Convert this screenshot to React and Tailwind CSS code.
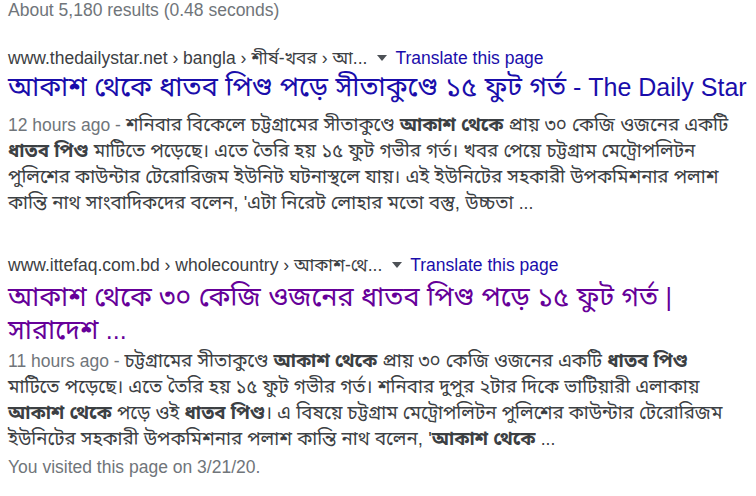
const F = { fontFamily: '"Liberation Sans", Arial, "Noto Sans Bengali", sans-serif' };

function Url({ domain, crumbs }) {
  return (
    <div className="flex items-center h-5 text-[17.5px] leading-5 whitespace-nowrap">
      <span className="text-[#3c4043]">{domain}{crumbs}</span>
      <span className="ml-[10px] mr-[8px] inline-block w-0 h-0 border-l-[5px] border-r-[5px] border-t-[6px] border-l-transparent border-r-transparent border-t-[#4d5156]" />
      <span className="text-[#1a0dab]">Translate this page</span>
    </div>
  );
}

function Date({ children }) {
  return <span className="text-[17.5px] text-[#70757a]">{children}</span>;
}

export default function App() {
  return (
    <div className="w-[756px] h-[496px] bg-white overflow-hidden pl-[8px]" style={F}>
      <div className="h-5 leading-5 text-[17.5px] text-[#70757a]">About 5,180 results (0.48 seconds)</div>

      <div className="mt-[28px]">
        <Url domain="www.thedailystar.net" crumbs=" › bangla › শীর্ষ-খবর › আ..." />
        <div className="mt-[3px] text-[27px] leading-[33px] text-[#1a0dab] whitespace-nowrap">
          আকাশ থেকে ধাতব পিণ্ড পড়ে সীতাকুণ্ডে ১৫ ফুট গর্ত<span className="text-[25px]"> - The Daily Star</span>
        </div>
        <div className="mt-[8px] text-[18.7px] leading-[26px] text-[#3c4043]">
          <div className="whitespace-nowrap"><Date>12 hours ago - </Date>শনিবার বিকেলে চট্টগ্রামের সীতাকুণ্ডে <b>আকাশ থেকে</b> প্রায় ৩০ কেজি ওজনের একটি</div>
          <div className="whitespace-nowrap"><b>ধাতব পিণ্ড</b> মাটিতে পড়েছে। এতে তৈরি হয় ১৫ ফুট গভীর গর্ত। খবর পেয়ে চট্টগ্রাম মেট্রোপলিটন</div>
          <div className="whitespace-nowrap">পুলিশের কাউন্টার টেরোরিজম ইউনিট ঘটনাস্থলে যায়। এই ইউনিটের সহকারী উপকমিশনার পলাশ</div>
          <div className="whitespace-nowrap">কান্তি নাথ সাংবাদিকদের বলেন, 'এটা নিরেট লোহার মতো বস্তু, উচ্চতা <span className="text-[17.5px]">...</span></div>
        </div>
      </div>

      <div className="mt-[39px]">
        <Url domain="www.ittefaq.com.bd" crumbs=" › wholecountry › আকাশ-থে..." />
        <div className="mt-[6px] text-[27px] leading-[33px] text-[#660099]">
          <div className="whitespace-nowrap">আকাশ থেকে ৩০ কেজি ওজনের ধাতব পিণ্ড পড়ে ১৫ ফুট গর্ত <span className="text-[25px]">|</span></div>
          <div className="whitespace-nowrap">সারাদেশ <span className="text-[25px]">...</span></div>
        </div>
        <div className="mt-[1px] text-[18.7px] leading-[26px] text-[#3c4043]">
          <div className="whitespace-nowrap"><Date>11 hours ago - </Date>চট্টগ্রামের সীতাকুণ্ডে <b>আকাশ থেকে</b> প্রায় ৩০ কেজি ওজনের একটি <b>ধাতব পিণ্ড</b></div>
          <div className="whitespace-nowrap">মাটিতে পড়েছে। এতে তৈরি হয় ১৫ ফুট গভীর গর্ত। শনিবার দুপুর ২টার দিকে ভাটিয়ারী এলাকায়</div>
          <div className="whitespace-nowrap"><b>আকাশ থেকে</b> পড়ে ওই <b>ধাতব পিণ্ড</b>। এ বিষয়ে চট্টগ্রাম মেট্রোপলিটন পুলিশের কাউন্টার টেরোরিজম</div>
          <div className="whitespace-nowrap">ইউনিটের সহকারী উপকমিশনার পলাশ কান্তি নাথ বলেন, '<b>আকাশ থেকে</b> <span className="text-[17.5px]">...</span></div>
        </div>
        <div className="mt-[5px] h-5 leading-5 text-[17.5px] text-[#70757a]">You visited this page on 3/21/20.</div>
      </div>
    </div>
  );
}
